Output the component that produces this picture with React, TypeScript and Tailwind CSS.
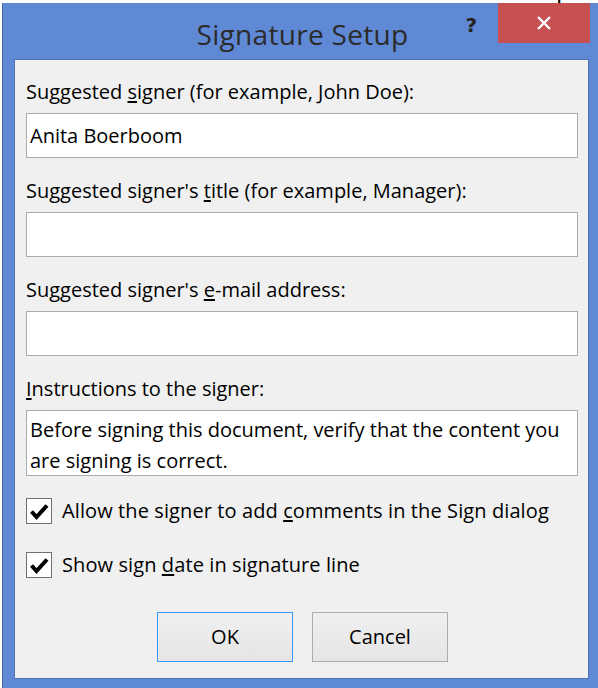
import { ReactNode } from "react";

function Label({ children }: { children: ReactNode }) {
	return <div className="h-[30px] leading-[30px] text-[20px] text-black whitespace-nowrap">{children}</div>;
}

function Field({ value, lines }: { value?: string; lines?: string[] }) {
	if (lines) {
		return (
			<div className="mt-[6px] h-[66px] border border-[#ababab] bg-white px-[3px] pt-[3px] text-[20px] leading-[31px] text-black">
				{lines.map((l) => (
					<div key={l} className="whitespace-nowrap">
						{l}
					</div>
				))}
			</div>
		);
	}
	return (
		<div className="mt-[6px] h-[45px] border border-[#ababab] bg-white px-[3px] text-[20px] leading-[43px] text-black whitespace-nowrap">
			{value}
		</div>
	);
}

function Check({ children }: { children: ReactNode }) {
	return (
		<div className="flex items-center h-[26px]">
			<div className="w-[26px] h-[26px] border border-[#707070] bg-white flex items-center justify-center">
				<svg width="24" height="24" viewBox="0 0 24 24">
					<path d="M4.5 12.5 L9.5 18 L20 6.5" fill="none" stroke="#000" strokeWidth="4" />
				</svg>
			</div>
			<div className="ml-[10px] text-[20px] text-black whitespace-nowrap tracking-[0.1px]">{children}</div>
		</div>
	);
}

export default function App() {
	return (
		<div className="w-[598px] h-[688px] bg-white overflow-hidden flex flex-col font-['Segoe_UI','Open_Sans',sans-serif]">
			<div className="h-[3px] overflow-hidden">
				<div className="-mt-[21px] ml-[6px] text-[24px] leading-[24px] text-black whitespace-nowrap font-['Liberation_Sans',sans-serif]">
					as usual. We ta aceasual. the rest as usual. Lorem ipsum
				</div>
			</div>
			<div className="flex flex-1">
				<div className="w-[2px]"></div>
				<div className="flex-1 flex flex-col bg-[#5f89d4] border-l border-[#44659f] relative">
					<div className="h-[56px] flex justify-center items-center pt-[6px] pl-[4px]">
						<span className="text-[28px] text-[#2b2b2b] tracking-[0.3px]">Signature Setup</span>
					</div>
					<div className="absolute right-[121px] top-[7px] text-[20px] font-bold text-[#222] font-['DejaVu_Sans',sans-serif]">?</div>
					<div className="absolute right-[8px] top-0 w-[92px] h-[40px] bg-[#c75050] flex items-center justify-center">
						<svg width="16" height="16" viewBox="0 0 16 16">
							<path d="M2 2 L14 14 M14 2 L2 14" stroke="#fff" strokeWidth="2.4" />
						</svg>
					</div>
					<div className="flex-1 ml-[11px] mr-[9px] mb-[9px] bg-[#f0f0f0] border border-[#4d70b3] pl-[11px] pr-[10px] pt-[17px] flex flex-col">
						<Label>
							Suggested <u className="underline-offset-2">s</u>igner (for example, John Doe):
						</Label>
						<Field value="Anita Boerboom" />
						<div className="h-[18px]"></div>
						<Label>
							Suggested signer's <u className="underline-offset-2">t</u>itle (for example, Manager):
						</Label>
						<Field value="" />
						<div className="h-[18px]"></div>
						<Label>
							Suggested signer's <u className="underline-offset-2">e</u>-mail address:
						</Label>
						<Field value="" />
						<div className="h-[18px]"></div>
						<Label>
							<u className="underline-offset-2">I</u>nstructions to the signer:
						</Label>
						<Field
							lines={[
								"Before signing this document, verify that the content you",
								"are signing is correct.",
							]}
						/>
						<div className="mt-[22px]">
							<Check>
								Allow the signer to add <u className="underline-offset-2">c</u>omments in the Sign dialog
							</Check>
						</div>
						<div className="mt-[28px]">
							<Check>
								Show sign <u className="underline-offset-2">d</u>ate in signature line
							</Check>
						</div>
						<div className="mt-[34px] flex justify-center gap-[19px] pl-[1px]">
							<button className="w-[136px] h-[50px] border border-[#3399ff] bg-gradient-to-b from-[#f0f0f0] to-[#e5e5e5] text-[20px] text-black">
								OK
							</button>
							<button className="w-[136px] h-[50px] border border-[#acacac] bg-gradient-to-b from-[#f0f0f0] to-[#e5e5e5] text-[20px] text-black">
								Cancel
							</button>
						</div>
					</div>
				</div>
			</div>
		</div>
	);
}
